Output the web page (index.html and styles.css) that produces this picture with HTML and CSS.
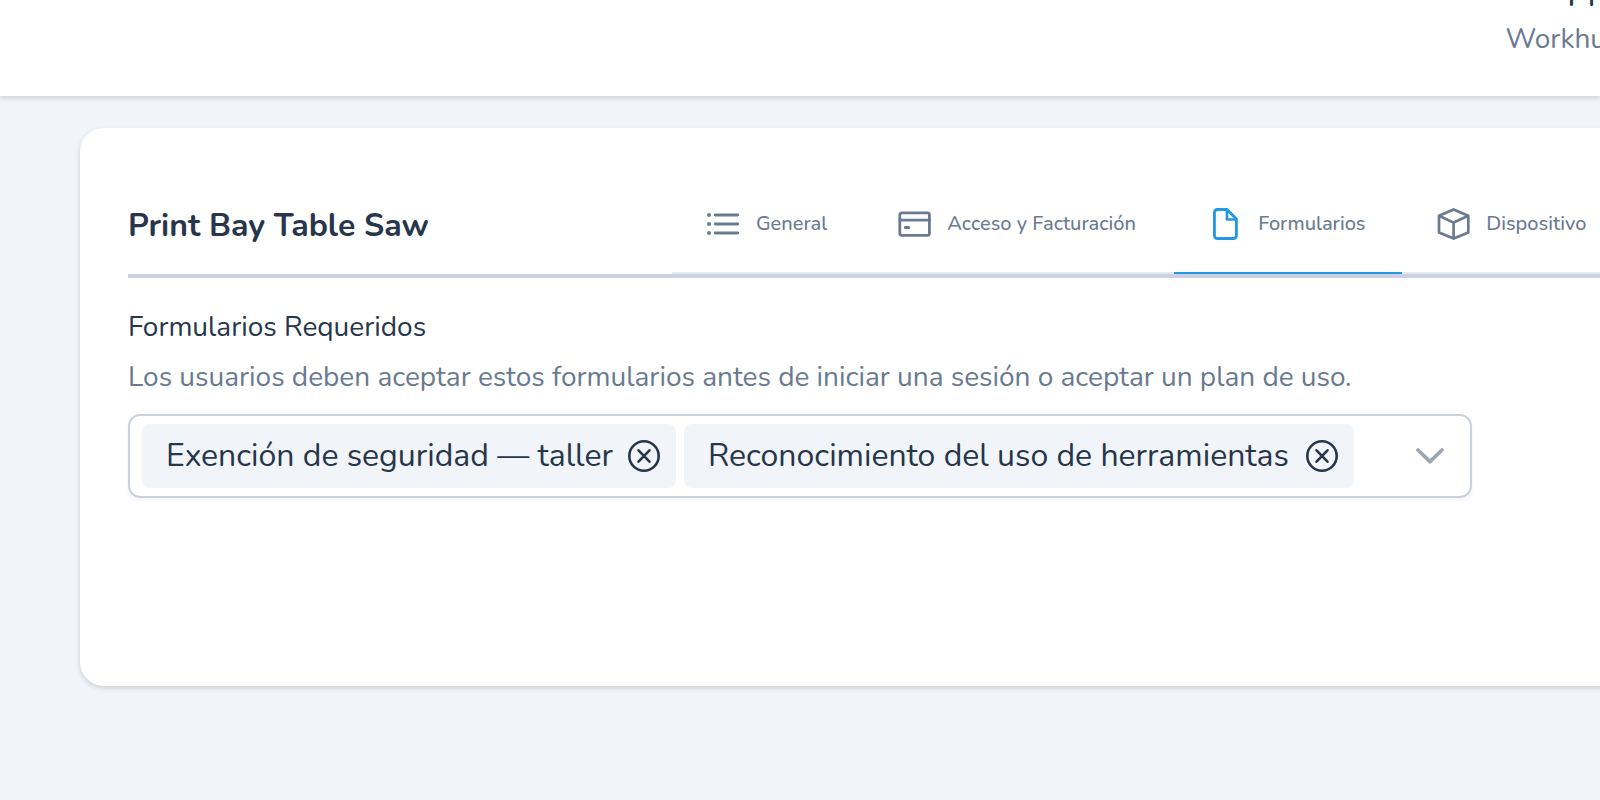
FILE: index.html
```html
<!DOCTYPE html>
<html lang="es">
<head>
<meta charset="utf-8">
<meta name="viewport" content="width=device-width, initial-scale=1">
<title>Print Bay Table Saw</title>
<link rel="stylesheet" href="styles.css">
</head>
<body>
<header class="topbar">
  <div class="account">
    <span class="account-name">Ph</span>
    <span class="account-org">Workhu</span>
  </div>
</header>
<main class="card">
  <div class="card-head">
    <h1 class="title">Print Bay Table Saw</h1>
    <nav class="tabs">
      <a class="tab tab-general" href="#general">
        <svg class="icon" viewBox="0 0 32 32" aria-hidden="true"><g fill="none" stroke="currentColor" stroke-width="2.9" stroke-linecap="round"><path d="M7.3 7H29.7M7.3 16H29.7M7.3 25H29.7"/></g><g fill="currentColor"><circle cx="1" cy="7" r="2"/><circle cx="1" cy="16" r="2"/><circle cx="1" cy="25" r="2"/></g></svg>
        <span>General</span>
      </a>
      <a class="tab tab-access" href="#acceso">
        <svg class="icon" viewBox="0 0 32 32" aria-hidden="true"><g fill="none" stroke="currentColor" stroke-width="2.8" stroke-linecap="round"><rect x="0.8" y="4.9" width="29.6" height="22.4" rx="2"/><path d="M1 12.2H30.4"/><path stroke-width="3" d="M6.3 19.6H9.7"/></g></svg>
        <span>Acceso y Facturación</span>
      </a>
      <a class="tab tab-forms active" href="#formularios" aria-current="page">
        <svg class="icon" viewBox="0 0 32 32" aria-hidden="true"><path fill="none" stroke="currentColor" stroke-width="2.9" stroke-linejoin="round" d="M7.4 1.5H17L26.4 11V27.5A3 3 0 0 1 23.4 30.5H7.4A3 3 0 0 1 4.4 27.5V4.5A3 3 0 0 1 7.4 1.5Z"/><path fill="none" stroke="currentColor" stroke-width="2.7" stroke-linejoin="round" d="M17 1.5V11.5H26.4"/></svg>
        <span>Formularios</span>
      </a>
      <a class="tab tab-device" href="#dispositivo">
        <svg class="icon" viewBox="0 0 32 32" aria-hidden="true"><path fill="none" stroke="currentColor" stroke-width="2.7" stroke-linejoin="round" d="M15.6 1.4L30.3 7.8V24.4L15.6 30.6L1 24.4V7.8ZM1 7.8L15.6 14.6L30.3 7.8M15.6 14.6V30.6"/></svg>
        <span>Dispositivo</span>
      </a>
    </nav>
  </div>
  <section class="field">
    <h2 class="field-label" id="forms-label">Formularios Requeridos</h2>
    <p class="field-help">Los usuarios deben aceptar estos formularios antes de iniciar una sesión o aceptar un plan de uso.</p>
    <div class="multiselect" role="group" aria-labelledby="forms-label">
      <div class="chips">
        <span class="chip chip-waiver"><span>Exención de seguridad — taller</span>
          <button class="remove" type="button" aria-label="Quitar Exención de seguridad"><svg class="icon" viewBox="0 0 32 32" aria-hidden="true"><g fill="none" stroke="currentColor" stroke-width="2.6" stroke-linecap="round"><circle cx="16" cy="16" r="14.7"/><path d="M10.5 10.3L21.5 21.7M21.5 10.3L10.5 21.7"/></g></svg></button></span>
        <span class="chip chip-tools"><span>Reconocimiento del uso de herramientas</span>
          <button class="remove" type="button" aria-label="Quitar Reconocimiento del uso de herramientas"><svg class="icon" viewBox="0 0 32 32" aria-hidden="true"><g fill="none" stroke="currentColor" stroke-width="2.6" stroke-linecap="round"><circle cx="16" cy="16" r="14.7"/><path d="M10.5 10.3L21.5 21.7M21.5 10.3L10.5 21.7"/></g></svg></button></span>
      </div>
      <button class="toggle" type="button" aria-label="Abrir lista"><svg class="icon" viewBox="0 0 32 32" aria-hidden="true"><path fill="none" stroke="currentColor" stroke-width="3.8" stroke-linecap="round" stroke-linejoin="round" d="M4 10L16 21.7L28 10"/></svg></button>
    </div>
  </section>
</main>
</body>
</html>
```
FILE: styles.css
```css
* { box-sizing: border-box; }
body {
  margin: 0;
  min-height: 100vh;
  overflow-x: hidden;
  background: #f1f5fa;
  color: #27364b;
  font-family: Nunito, Lato, sans-serif;
}
.topbar {
  height: 96px;
  overflow: hidden;
  display: flex;
  justify-content: flex-end;
  align-items: flex-end;
  padding-bottom: 37px;
  background: #fff;
  box-shadow: 0 2px 6px rgba(0, 0, 0, .1), 0 2px 4px rgba(0, 0, 0, .06);
}
.account {
  display: flex;
  flex-direction: column;
  align-items: flex-end;
  margin-right: -6px;
}
.account-name { font-size: 32px; line-height: 46px; font-weight: 500; }
.account-org { font-size: 28px; line-height: 40px; color: #697a91; }
.card {
  margin: 32px -40px 0 80px;
  min-height: 558px;
  padding: 48px;
  background: #fff;
  border-radius: 24px;
  box-shadow: 0 2px 6px rgba(0, 0, 0, .1), 0 2px 4px rgba(0, 0, 0, .06);
}
.card-head {
  display: flex;
  align-items: stretch;
  margin-right: -48px;
  border-bottom: 4px solid #cad2e0;
}
.title {
  flex: 0 0 544px;
  margin: 0;
  padding-top: 2px;
  align-self: center;
  font-size: 32px;
  line-height: 48px;
  font-weight: 700;
}
.tabs {
  flex: 1;
  display: flex;
  border-bottom: 2px solid #e5e9f1;
}
.tab {
  flex: none;
  display: flex;
  align-items: center;
  gap: 16px;
  height: 98px;
  padding: 0 36px;
  margin-bottom: -2px;
  border-bottom: 2px solid transparent;
  color: #697a91;
  font-size: 20px;
  line-height: 28px;
  font-weight: 500;
  text-decoration: none;
  white-space: nowrap;
}
.tab-general { min-width: 191px; }
.tab-access { min-width: 311px; }
.tab-forms { min-width: 228px; }
.tab.active { border-bottom-color: #2499e3; }
.tab.active .icon { color: #2499e3; }
.icon { display: block; flex: none; width: 32px; height: 32px; overflow: visible; }
.field { padding-top: 29px; }
.field-label {
  margin: 0;
  font-size: 28px;
  line-height: 40px;
  font-weight: 400;
}
.field-help {
  margin: 8px 0 15px;
  font-size: 28px;
  line-height: 44px;
  color: #697a91;
}
.multiselect {
  display: flex;
  align-items: center;
  justify-content: space-between;
  max-width: 1344px;
  min-height: 84px;
  padding: 8px 24px 8px 12px;
  border: 2px solid #cad2e0;
  border-radius: 12px;
  box-shadow: 0 2px 4px rgba(0, 0, 0, .05);
}
.chips { display: flex; gap: 8px; }
.chip {
  display: flex;
  align-items: center;
  justify-content: space-between;
  height: 64px;
  padding: 0 16px 0 24px;
  border-radius: 8px;
  background: #f1f5fa;
  font-size: 32px;
  line-height: 48px;
  white-space: nowrap;
}
.chip-waiver { min-width: 534px; }
.chip-tools { min-width: 670px; }
.remove, .toggle {
  flex: none;
  padding: 0;
  border: 0;
  background: none;
  color: inherit;
  cursor: pointer;
}
.toggle { color: #9ca6b5; }
```
